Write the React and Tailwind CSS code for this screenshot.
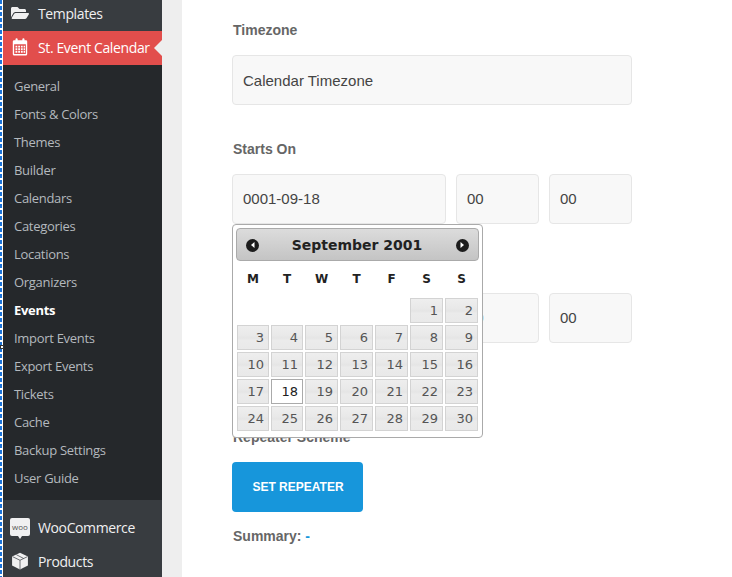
import React from "react";
import { FaFolderOpen } from "react-icons/fa";

const sub = ["General","Fonts & Colors","Themes","Builder","Calendars","Categories","Locations","Organizers","Events","Import Events","Export Events","Tickets","Cache","Backup Settings","User Guide"];
const days = ["M","T","W","T","F","S","S"];
const dates = [null,null,null,null,null,1,2,3,4,5,6,7,8,9,10,11,12,13,14,15,16,17,18,19,20,21,22,23,24,25,26,27,28,29,30];

function Cal({ className }) {
  return (
    <svg viewBox="0 0 20 20" className={className} fill="#fff">
      <path fillRule="evenodd" d="M3.500 2.500H5V1.500a1.200 1.200 0 0 1 2.400 0v1h5.200v-1a1.200 1.200 0 0 1 2.400 0v1h1.500A1.500 1.500 0 0 1 18 4v14a1.500 1.500 0 0 1-1.500 1.500h-13A1.500 1.500 0 0 1 2 18V4a1.500 1.500 0 0 1 1.500-1.500ZM3.500 7v10.900h13V7Z" />
      <path d="M5 8.500h2v2H5zM8 8.500h2v2H8zM11 8.500h2v2h-2zM14 8.500h1.600v2H14zM5 11.500h2v2H5zM8 11.500h2v2H8zM11 11.500h2v2h-2zM14 11.500h1.600v2H14zM5 14.500h2v2H5zM8 14.500h2v2H8zM11 14.500h2v2h-2zM14 14.500h1.600v2H14z" />
    </svg>
  );
}

function Box({ className }) {
  return (
    <svg viewBox="0 0 20 20" className={className}>
      <path fill="#f0f0f1" d="M10 .8 18.800 5v10L10 19.500 1.200 15V5Z" />
      <path fill="none" stroke="#3a3f44" strokeWidth=".8" d="M1.800 5.200 10 9.200 18.200 5.200M6 3 14 7.200M10 9.200V19" />
    </svg>
  );
}

function Arrow({ dir }) {
  return (
    <span className="w-[13px] h-[13px] rounded-full bg-[#1c1c1c] flex items-center justify-center">
      <svg viewBox="0 0 8 8" className="w-2 h-2" fill="#fff">
        {dir === "l" ? <path d="M5.500 1v6L2 4Z" /> : <path d="M2.500 1v6L6 4Z" />}
      </svg>
    </span>
  );
}

function Input({ children, className = "" }) {
  return (
    <div className={`h-[50px] rounded-[4px] border border-[#e6e6e6] bg-[#f8f8f8] flex items-center px-[10px] text-[15px] text-[#444] ${className}`}>
      {children}
    </div>
  );
}

function Label({ children }) {
  return <div className="h-5 flex items-center pl-[1px] text-[14px] font-bold text-[#666] mb-[15px]">{children}</div>;
}

function TimeRow({ value }) {
  return (
    <div className="flex gap-[10px]">
      <Input className="w-[214px] pt-[1px]">{value}</Input>
      <Input className="w-[83px] pt-[1px]">00</Input>
      <Input className="w-[83px] pt-[1px]">00</Input>
    </div>
  );
}

export default function App() {
  return (
    <div className="relative flex w-[732px] h-[577px] overflow-hidden bg-white font-['Liberation_Sans',sans-serif]">
      <div className="absolute left-0 top-[345px] w-[4px] h-[4px] bg-white border border-[#333] z-10" />
      <div className="w-[3px] shrink-0 bg-[repeating-linear-gradient(180deg,#1a73d9_0,#1a73d9_4px,#ffffff_4px,#ffffff_6px)] border-r border-white" />
      <aside className="w-[159px] shrink-0 h-full bg-[#383c40] text-[14px] font-['Open_Sans',sans-serif] tracking-[-0.38px] text-[#f0f0f1]">
        <div className="h-[34px] -mt-[3px] pb-[2px] flex items-center pl-[8px] gap-[9px]">
          <FaFolderOpen className="w-[18px] h-[16px] text-[#f0f0f1]" />
          <span>Templates</span>
        </div>
        <div className="relative h-[34px] pb-[2px] bg-[#e24e4c] text-white flex items-center pl-[8px] gap-[9px]">
          <Cal className="w-[18px] h-[18px]" />
          <span>St. Event Calendar</span>
          <span className="absolute right-0 top-[9px] w-0 h-0 border-y-[8px] border-y-transparent border-r-[8px] border-r-[#eeeeee]" />
        </div>
        <div className="bg-[#25282b] pt-[8px] pb-[7px] pl-[11px] text-[13px] tracking-[-0.3px] text-[#b4b9be]">
          {sub.map((s) => (
            <div key={s} className={`h-[28px] flex items-center ${s === "Events" ? "font-bold text-white" : ""}`}>{s}</div>
          ))}
        </div>
        <div className="pt-[11px]">
          <div className="h-[34px] pb-[2px] flex items-center pl-[7px] gap-[8px]">
            <div className="relative w-[20px] h-[18px] rounded-[2px] bg-[#f0f0f1] flex items-center justify-center text-[8px] leading-none tracking-normal text-[#555]">woo
              <span className="absolute left-[8px] -bottom-[3px] w-0 h-0 border-t-[3px] border-t-[#f0f0f1] border-x-[2px] border-x-transparent" />
            </div>
            <span>WooCommerce</span>
          </div>
          <div className="h-[34px] pb-[2px] flex items-center pl-[8px] gap-[9px]">
            <Box className="w-[18px] h-[20px]" />
            <span>Products</span>
          </div>
        </div>
      </aside>
      <div className="w-[20px] shrink-0 bg-[#eeeeee]" />
      <main className="relative pl-[50px] pt-[20px] w-[450px]">
        <Label>Timezone</Label>
        <Input className="w-[400px] mb-[34px] pt-[2px]">Calendar Timezone</Input>
        <Label>Starts On</Label>
        <TimeRow value="0001-09-18" />
        <div className="h-[34px]" />
        <Label>Ends On</Label>
        <TimeRow value="" />
        <div className="h-[84px]" />
        <Label>Repeater Scheme</Label>
        <button className="block w-[131px] h-[50px] rounded-[4px] bg-[#1796db] text-white text-[12px] font-bold pl-[1px] pb-[1px]">SET REPEATER</button>
        <div className="h-[24px] mt-[12px] pl-[1px] flex items-center text-[14px] font-bold text-[#666]">Summary:&nbsp;<span className="text-[#1796db]">-</span></div>

        <div className="absolute left-[50px] top-[224px] w-[251px] h-[214px] rounded-[4px] border border-[#aaaaaa] bg-white p-[3px] font-['DejaVu_Sans',sans-serif]">
          <div className="h-[33px] rounded-[4px] border border-[#aaaaaa] bg-gradient-to-b from-[#dcdcdc] to-[#c4c4c4] flex items-center justify-between px-[9px] pt-[1px]">
            <Arrow dir="l" />
            <span className="text-[14px] font-bold text-[#222] pr-[1px]">September 2001</span>
            <Arrow dir="r" />
          </div>
          <div className="grid grid-cols-[32px_32px_33px_33px_33px_33px_33px] gap-x-[2px] px-[1px]">
            {days.map((d, i) => (
              <div key={i} className="h-[37px] pb-[2px] flex items-center justify-center text-[12px] font-bold text-[#222]">{d}</div>
            ))}
          </div>
          <div className="grid grid-cols-[32px_32px_33px_33px_33px_33px_33px] gap-[2px] px-[1px] auto-rows-[25px]">
            {dates.map((d, i) =>
              d === null ? <div key={i} /> : (
                <div key={i} className={`border text-[13px] text-right pr-[4px] leading-[24px] ${d === 18 ? "border-[#aaaaaa] bg-white text-[#212121]" : "border-[#d3d3d3] bg-[linear-gradient(180deg,#eeeeee_0%,#e9e9e9_40%,#e5e5e5_52%,#ebebeb_62%,#e9e9e9_100%)] text-[#555]"}`}>{d}</div>
              )
            )}
          </div>
        </div>
      </main>
    </div>
  );
}
